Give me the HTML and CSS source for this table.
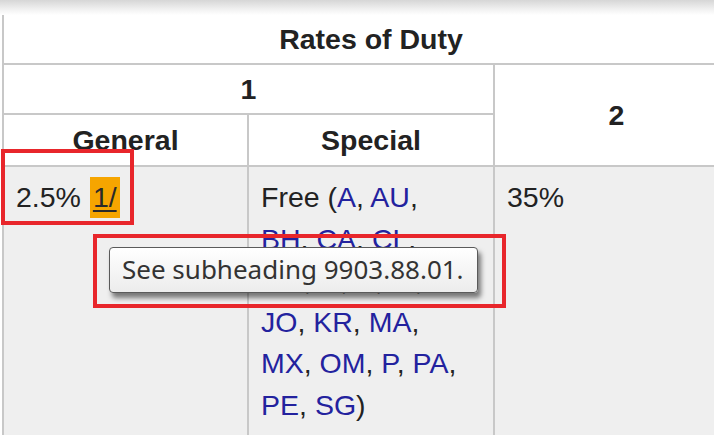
FILE: index.html
```html
<!DOCTYPE html>
<html>
<head>
<meta charset="utf-8">
<link rel="stylesheet" href="styles.css">
</head>
<body>
<div class="page">
  <div class="topshade"></div>
  <table class="duty">
    <colgroup>
      <col class="c1"><col class="c2"><col class="c3">
    </colgroup>
    <tr class="r-title"><th colspan="3">Rates of Duty</th></tr>
    <tr class="r-col"><th colspan="2">1</th><th rowspan="2">2</th></tr>
    <tr class="r-sub"><th>General</th><th>Special</th></tr>
    <tr class="r-data">
      <td>2.5% <a class="note">1/</a></td>
      <td>Free (<a class="lnk">A</a>, <a class="lnk">AU</a>,<br><a class="lnk">BH</a>, <a class="lnk">CA</a>, <a class="lnk">CL</a>,<br><a class="lnk">CO</a>, <a class="lnk">D</a>, <a class="lnk">E</a>, <a class="lnk">IL</a>,<br><a class="lnk">JO</a>, <a class="lnk">KR</a>, <a class="lnk">MA</a>,<br><a class="lnk">MX</a>, <a class="lnk">OM</a>, <a class="lnk">P</a>, <a class="lnk">PA</a>,<br><a class="lnk">PE</a>, <a class="lnk">SG</a>)</td>
      <td>35%</td>
    </tr>
  </table>
  <div class="mark mark-a"></div>
  <div class="tooltip">See subheading 9903.88.01.</div>
  <div class="mark mark-b"></div>
</div>
</body>
</html>
```

FILE: styles.css
```css
html, body {
  margin: 0;
  padding: 0;
  background: #ffffff;
  overflow: hidden;
}
.page {
  position: relative;
  width: 714px;
  height: 440px;
  overflow: hidden;
  font-family: "Liberation Sans", Arial, sans-serif;
  color: #222222;
}
.topshade {
  height: 15px;
  background: linear-gradient(to bottom, #d6d6d6, #f4f4f4 70%, #ffffff);
}
.duty {
  margin-left: 2px;
  width: 736px;
  border-collapse: collapse;
  table-layout: fixed;
  font-size: 28.5px;
  border-left: 2px solid #c4c4c4;
}
.c1 { width: 245px; }
.c2 { width: 246px; }
.c3 { width: 245px; }
.duty th {
  font-weight: bold;
  background: #ffffff;
  border: 2px solid #c8c8c8;
  padding: 0;
  text-align: center;
  vertical-align: middle;
}
.r-title th { border-top: none; height: 47px; padding-top: 1px; }
.r-col th { height: 48px; }
.r-sub th { height: 50px; }
.r-data td {
  background: #efefef;
  border: 2px solid #c8c8c8;
  border-bottom: none;
  vertical-align: top;
  padding: 10px 12px 0 12px;
  height: 258px;
  line-height: 41.5px;
  font-weight: normal;
}
.lnk {
  color: #23229e;
  text-decoration: none;
}
.note {
  display: inline-block;
  background: #f6a500;
  color: #2a2a2a;
  text-decoration: underline;
  text-decoration-thickness: 2px;
  text-underline-offset: 3px;
  padding: 0 3px;
  line-height: 41px;
  margin-left: 1px;
}
.mark {
  position: absolute;
  border: 4px solid #e8262b;
  box-sizing: border-box;
}
.mark-a {
  left: 1px;
  top: 149px;
  width: 133px;
  height: 76px;
}
.mark-b {
  left: 93px;
  top: 234px;
  width: 413px;
  height: 74px;
}
.tooltip {
  position: absolute;
  left: 109px;
  top: 247px;
  width: 369px;
  height: 46px;
  box-sizing: border-box;
  border: 1px solid #5a5a5a;
  border-radius: 4px;
  background: linear-gradient(to bottom, #ffffff, #ececec);
  box-shadow: 3px 5px 5px rgba(0, 0, 0, 0.5);
  font-family: "Noto Sans", "Open Sans", sans-serif;
  font-size: 26px;
  line-height: 42px;
  color: #333333;
  padding-left: 12px;
  white-space: nowrap;
}
```
